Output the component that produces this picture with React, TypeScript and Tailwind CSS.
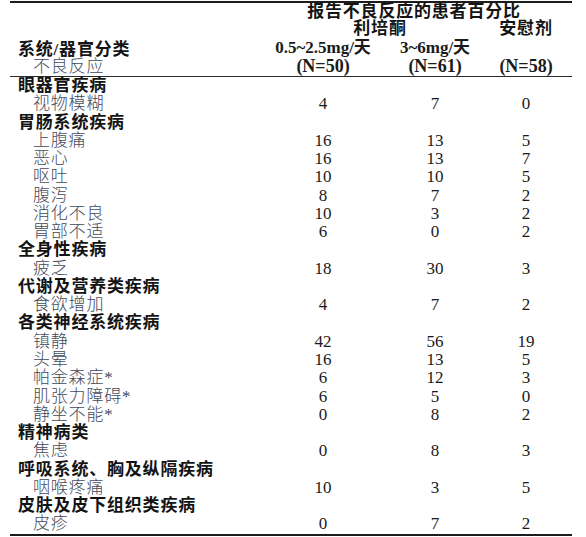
const sections: { title: string; rows: [string, number, number, number][] }[] = [
  { title: '眼器官疾病', rows: [['视物模糊', 4, 7, 0]] },
  {
    title: '胃肠系统疾病',
    rows: [
      ['上腹痛', 16, 13, 5],
      ['恶心', 16, 13, 7],
      ['呕吐', 10, 10, 5],
      ['腹泻', 8, 7, 2],
      ['消化不良', 10, 3, 2],
      ['胃部不适', 6, 0, 2],
    ],
  },
  { title: '全身性疾病', rows: [['疲乏', 18, 30, 3]] },
  { title: '代谢及营养类疾病', rows: [['食欲增加', 4, 7, 2]] },
  {
    title: '各类神经系统疾病',
    rows: [
      ['镇静', 42, 56, 19],
      ['头晕', 16, 13, 5],
      ['帕金森症*', 6, 12, 3],
      ['肌张力障碍*', 6, 5, 0],
      ['静坐不能*', 0, 8, 2],
    ],
  },
  { title: '精神病类', rows: [['焦虑', 0, 8, 3]] },
  { title: '呼吸系统、胸及纵隔疾病', rows: [['咽喉疼痛', 10, 3, 5]] },
  { title: '皮肤及皮下组织类疾病', rows: [['皮疹', 0, 7, 2]] },
]

const cols = 'grid grid-cols-[258px_110px_114px_68px]'
const heading = 'font-bold text-[17px] tracking-[0.8px] text-[#141414]'
const sub = 'font-light text-[17px] tracking-[0.8px] text-[#434a5c]'
const num = 'text-center text-[17px] text-[#1a1a1a]'

export default function App() {
  return (
    <div className="w-[586px] h-[537px] bg-white pt-px pl-[10px] font-[family-name:'Liberation_Serif','Noto_Sans_CJK_SC',serif] text-[#1a1a1a]">
      <div className="w-[562px] border-y-2 border-[#1c1c1c]">
        {/* table head */}
        <div className={`${cols} grid-rows-[17px_17px_20px_19px] border-b border-[#2a2a2a] leading-[17px]`}>
          <div className={`col-start-2 col-span-3 text-center ${heading}`}>报告不良反应的患者百分比</div>

          <div className={`col-start-2 col-span-2 text-center ${heading}`}>利培酮</div>
          <div className={`col-start-4 text-center ${heading}`}>安慰剂</div>

          <div className={`col-start-1 pl-2 pt-[4px] ${heading}`}>系统/器官分类</div>
          <div className="pt-[2px] text-center text-[17px] font-bold">0.5~2.5mg/天</div>
          <div className="pt-[2px] text-center text-[17px] font-bold">3~6mg/天</div>
          <div />

          <div className={`pl-[23px] pt-[1px] ${sub}`}>不良反应</div>
          <div className="text-center text-[18px] font-bold leading-[19px]">(N=50)</div>
          <div className="text-center text-[18px] font-bold leading-[19px]">(N=61)</div>
          <div className="text-center text-[18px] font-bold leading-[19px]">(N=58)</div>
        </div>

        {/* table body */}
        {sections.map((s) => (
          <div key={s.title}>
            <div className={`${cols} h-[18.27px] leading-[18.27px]`}>
              <div className={`col-span-4 pl-2 ${heading}`}>{s.title}</div>
            </div>
            {s.rows.map(([label, a, b, c]) => (
              <div key={label} className={`${cols} h-[18.27px] leading-[18.27px]`}>
                <div className={`pl-[23px] ${sub}`}>{label}</div>
                <div className={num}>{a}</div>
                <div className={num}>{b}</div>
                <div className={num}>{c}</div>
              </div>
            ))}
          </div>
        ))}
      </div>
    </div>
  )
}
